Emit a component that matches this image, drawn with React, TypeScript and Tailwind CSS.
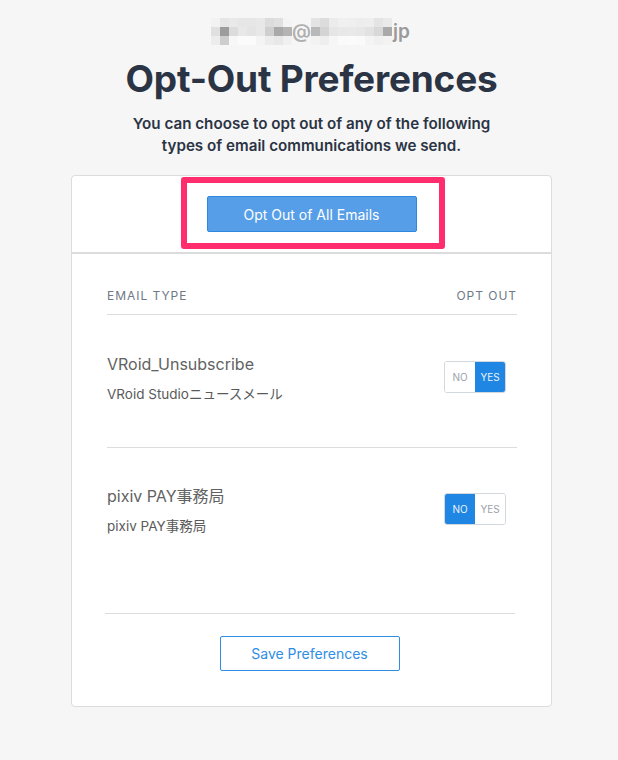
import React from "react";

const leftMosaic = [
  ["#f2f2f2", "#e6e6e6", "#e9e9e9", "#e6e6e6", "#e6e6e6", "#e8e8e8", "#dcdcdc", "#e0e0e0", "#f4f4f4"],
  ["#e0e0e0", "#9c9c9c", "#dcdcdc", "#e8e8e8", "#e4e4e4", "#e8e8e8", "#cfcfcf", "#a9a9a9", "#b4b4b4"],
  ["#ececec", "#cdcdcd", "#f7f7f7", "#fbfbfb", "#fbfbfb", "#f4f4f4", "#ececec", "#e8e8e8", "#f0f0f0"],
];
const rightMosaic = [
  ["#e4e4e4", "#dcdcdc", "#ececec", "#f0f0f0", "#efefef", "#ededed", "#eeeeee", "#e4e4e4", "#eaeaea"],
  ["#b9b9b9", "#d4d4d4", "#e6e6e6", "#e8e8e8", "#e9e9e9", "#e7e7e7", "#e2e2e2", "#d8d8d8", "#a9a9a9"],
  ["#f2f2f2", "#eeeeee", "#f6f6f6", "#fafafa", "#fbfbfb", "#fafafa", "#f4f4f4", "#f0f0f0", "#f3f3f3"],
];

function Mosaic({ data }: { data: string[][] }) {
  return (
    <div className="flex flex-col">
      {data.map((row, i) => (
        <div key={i} className="flex">
          {row.map((c, j) => (
            <div key={j} className="h-[9px] w-[9px]" style={{ backgroundColor: c }} />
          ))}
        </div>
      ))}
    </div>
  );
}

function Toggle({ yes }: { yes: boolean }) {
  return (
    <div className="flex h-[32px] w-[62px] overflow-hidden rounded-[3px] border border-[#d3d8de] text-[10px] leading-none">
      <div
        className={`flex flex-1 items-center justify-center ${
          !yes ? "bg-[#1f86e3] text-[#eaf3fc]" : "bg-white text-[#9aa2ab]"
        }`}
      >
        NO
      </div>
      <div
        className={`flex flex-1 items-center justify-center ${
          yes ? "bg-[#1f86e3] text-[#eaf3fc]" : "bg-white text-[#9aa2ab]"
        }`}
      >
        YES
      </div>
    </div>
  );
}

function Row({ name, sub, yes, border }: { name: string; sub: string; yes: boolean; border: boolean }) {
  return (
    <div className={`flex items-start justify-between ${border ? "border-b border-[#dcdcdc] pt-[37px] pb-[43px]" : "pt-[36px]"}`}>
      <div>
        <div className="text-[16px] leading-[24px] text-[#626262]">{name}</div>
        <div className="mt-[8px] text-[13.5px] leading-[20px] text-[#5a5a5a]">{sub}</div>
      </div>
      <div className="mr-[11px] mt-[9px]">
        <Toggle yes={yes} />
      </div>
    </div>
  );
}

export default function App() {
  return (
    <div
      className="min-h-[760px] bg-[#f6f6f6]"
      style={{ fontFamily: 'Inter, "Noto Sans CJK JP", sans-serif' }}
    >
      <div className="ml-[71px] w-[481px] pt-[18px]">
        <div className="flex items-center justify-center">
          <div className="ml-[-2px]">
            <Mosaic data={leftMosaic} />
          </div>
          <span className="text-[19px] font-semibold leading-[27px] text-[#b0b0b0]">@</span>
          <Mosaic data={rightMosaic} />
          <span className="ml-[1px] text-[19px] font-semibold leading-[27px] text-[#9a9a9a]">jp</span>
        </div>
        <h1 className="mt-[12px] text-center text-[37px] font-bold leading-[44px] tracking-[-0.2px] text-[#2b3444]">
          Opt-Out Preferences
        </h1>
        <p className="mt-[12px] text-center text-[15.2px] font-semibold leading-[22px] text-[#2b3444]">
          You can choose to opt out of any of the following
          <br />
          types of email communications we send.
        </p>

        <div className="relative mt-[18px] rounded-[4px] border border-[#dcdcdc] bg-white">
          <div className="flex justify-center border-b-2 border-[#dcdcdc] pt-[20px] pb-[20px]">
            <button className="h-[36px] w-[210px] rounded-[2px] border border-[#2f88e0] bg-[#569ee7] text-[14px] text-white">
              Opt Out of All Emails
            </button>
          </div>
          <div className="pointer-events-none absolute left-[109px] top-[1px] h-[72px] w-[264px] rounded-[3px] border-[6px] border-[#ff2d6e]" />

          <div className="pl-[35px] pr-[34px]">
            <div className="flex justify-between border-b border-[#dcdcdc] pt-[34px] pb-[10px] text-[12px] leading-[16px] tracking-[0.08em] text-[#6e7886]">
              <span>EMAIL TYPE</span>
              <span>OPT OUT</span>
            </div>
            <Row name="VRoid_Unsubscribe" sub="VRoid Studioニュースメール" yes={true} border={true} />
            <Row name="pixiv PAY事務局" sub="pixiv PAY事務局" yes={false} border={false} />
          </div>

          <div className="ml-[33px] mt-[77px] w-[410px] border-t border-[#dcdcdc]" />
          <div className="flex justify-center pt-[22px] pb-[35px] pr-[4px]">
            <button className="h-[35px] w-[180px] rounded-[2px] border border-[#2f8de4] bg-white text-[14px] text-[#2f8de4]">
              Save Preferences
            </button>
          </div>
        </div>
      </div>
    </div>
  );
}
